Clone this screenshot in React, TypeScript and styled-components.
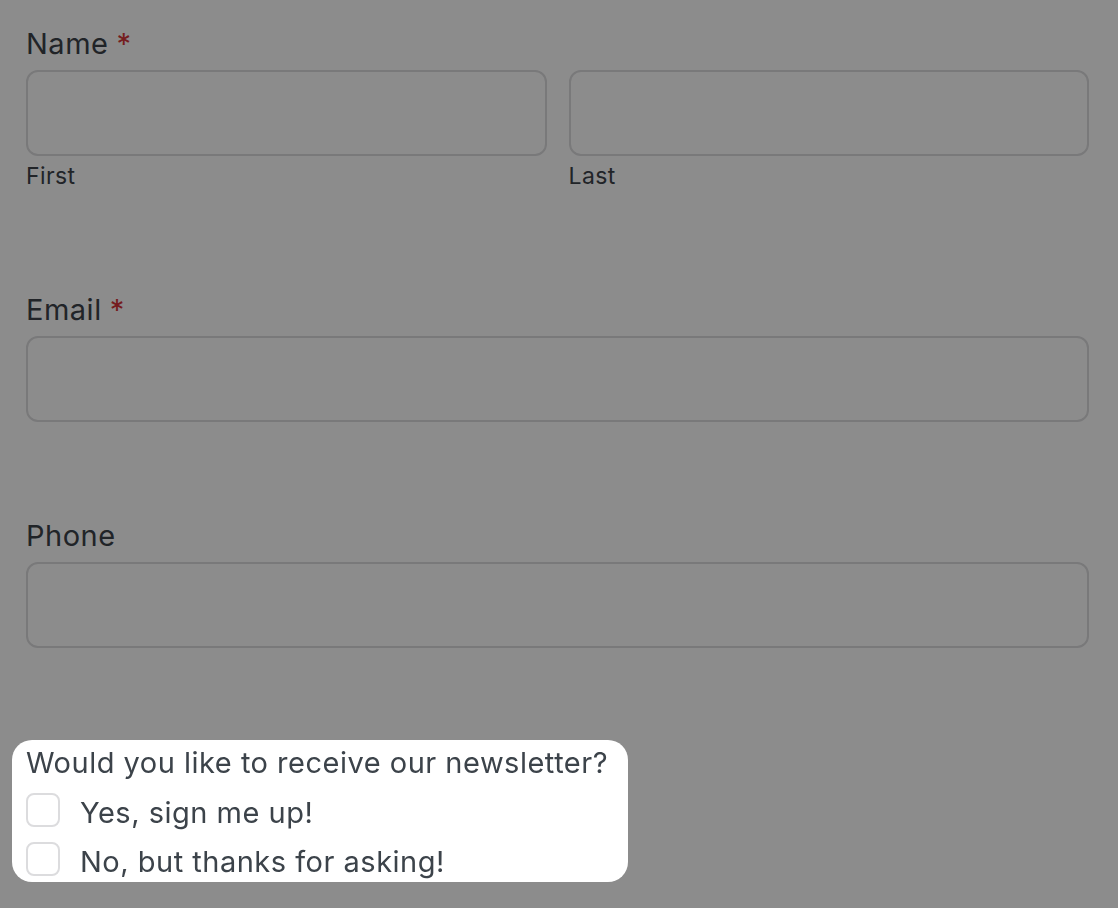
import React from "react";
import styled, { createGlobalStyle } from "styled-components";

const GlobalStyle = createGlobalStyle`
  * { box-sizing: border-box; }
  body {
    margin: 0;
    background: #ffffff;
    font-family: Inter, "Noto Sans", "Liberation Sans", sans-serif;
    color: #3c434a;
  }
`;

/* dims the whole page; the highlighted group sits above it */
const Overlay = styled.div`
  position: fixed;
  inset: 0;
  background: rgba(0, 0, 0, 0.45);
  z-index: 1;
  pointer-events: none;
`;

const Form = styled.form`
  padding: 26px 29px 40px 26px;
`;

const Field = styled.div<{ $gap?: number }>`
  margin-bottom: ${({ $gap }) => $gap ?? 97}px;
`;

const Label = styled.label`
  display: block;
  font-size: 29px;
  letter-spacing: 0.5px;
  line-height: 36px;
  margin-bottom: 8px;
`;

const Required = styled.span`
  color: #d63638;
  margin-left: 8px;
`;

const NameRow = styled.div`
  display: grid;
  grid-template-columns: 1fr 1fr;
  gap: 22px;
`;

const Input = styled.input`
  display: block;
  width: 100%;
  height: 86px;
  border: 2px solid #dcdcde;
  border-radius: 12px;
  background: #ffffff;
  font: inherit;
  padding: 0 16px;
`;

const SubLabel = styled.label`
  display: block;
  font-size: 23px;
  letter-spacing: 0.4px;
  line-height: 30px;
  margin-top: 5px;
`;

const Group = styled.div`
  position: relative;
  z-index: 2;
  width: fit-content;
  margin-left: -14px;
  padding: 5px 20px 2px 14px;
  background: #ffffff;
  border-radius: 20px;
`;

const Legend = styled.div`
  font-size: 29px;
  letter-spacing: 0.5px;
  line-height: 36px;
  margin-bottom: 12px;
`;

const Option = styled.label`
  display: flex;
  align-items: flex-start;
  gap: 20px;
  font-size: 29px;
  letter-spacing: 0.5px;
  line-height: 36px;
  & + & {
    margin-top: 11px;
  }
`;

const Check = styled.input`
  appearance: none;
  margin: 0;
  flex: none;
  width: 34px;
  height: 34px;
  border: 2px solid #dcdcde;
  border-radius: 8px;
  background: #ffffff;
`;

const OptionText = styled.span`
  padding-top: 2px;
`;

export default function App() {
  return (
    <>
      <GlobalStyle />
      <Overlay />
      <Form>
        <Field $gap={101}>
          <Label>
            Name<Required>*</Required>
          </Label>
          <NameRow>
            <div>
              <Input type="text" />
              <SubLabel>First</SubLabel>
            </div>
            <div>
              <Input type="text" />
              <SubLabel>Last</SubLabel>
            </div>
          </NameRow>
        </Field>
        <Field $gap={96}>
          <Label>
            Email<Required>*</Required>
          </Label>
          <Input type="email" />
        </Field>
        <Field $gap={92}>
          <Label>Phone</Label>
          <Input type="tel" />
        </Field>
        <Group role="group">
          <Legend>Would you like to receive our newsletter?</Legend>
          <Option>
            <Check type="checkbox" />
            <OptionText>Yes, sign me up!</OptionText>
          </Option>
          <Option>
            <Check type="checkbox" />
            <OptionText>No, but thanks for asking!</OptionText>
          </Option>
        </Group>
      </Form>
    </>
  );
}
